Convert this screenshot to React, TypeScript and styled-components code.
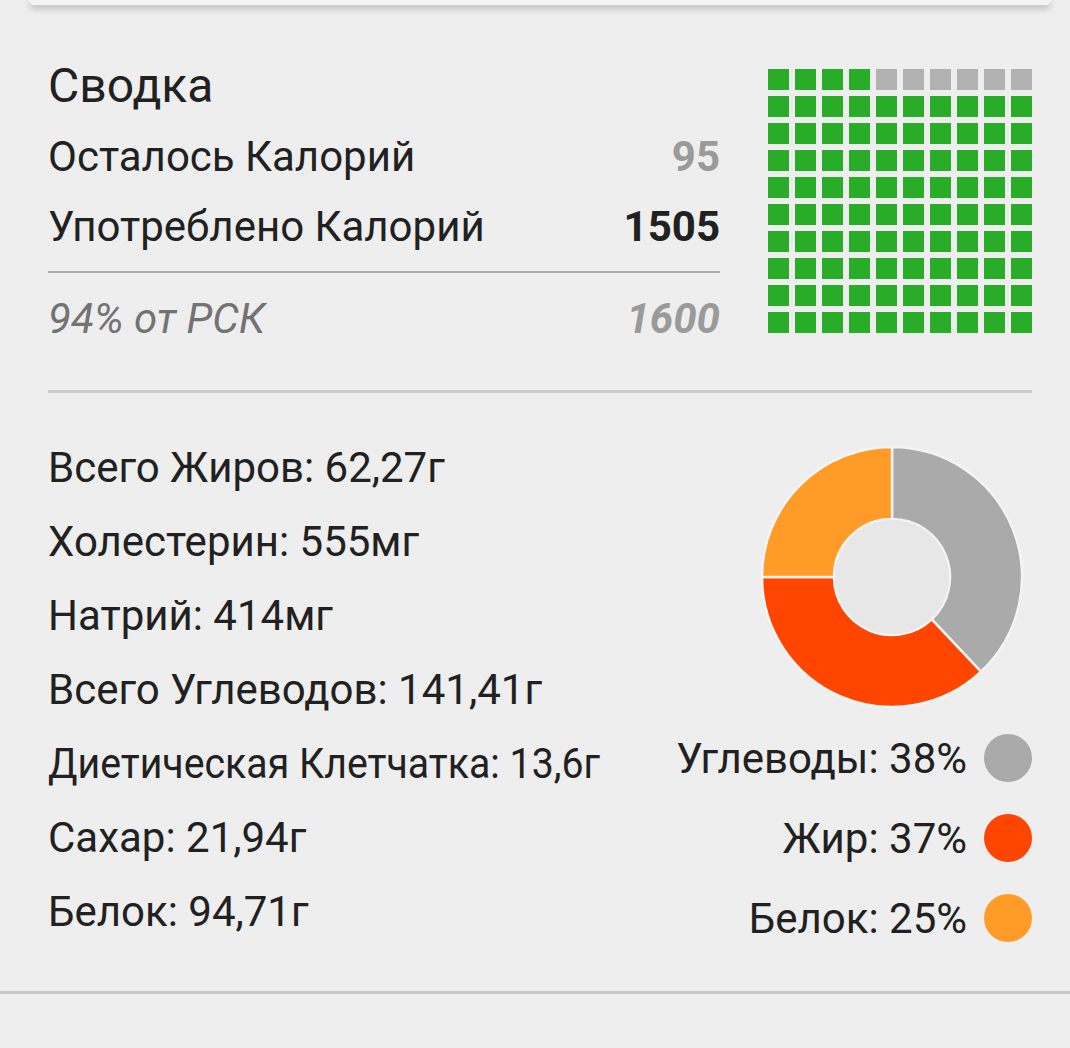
import React from "react";
import styled, { createGlobalStyle } from "styled-components";

const GlobalStyle = createGlobalStyle`
  html, body {
    margin: 0;
    padding: 0;
    background: #eeeeee;
  }
  body {
    font-family: Roboto, "Noto Sans", "Liberation Sans", sans-serif;
    color: #212121;
  }
`;

const Page = styled.div`
  width: 1070px;
  min-height: 1048px;
  background: #eeeeee;
  overflow: hidden;
`;

const TopCard = styled.div`
  height: 5px;
  margin: 0 19px 0 29px;
  background: #f4f4f4;
  border-radius: 0 0 12px 12px;
  box-shadow: 0 3px 7px rgba(0, 0, 0, 0.28);
`;

const Summary = styled.section`
  display: flex;
  gap: 48px;
  padding: 53px 38px 0 48px;
`;

const SummaryText = styled.div`
  width: 672px;
  display: flex;
  flex-direction: column;
`;

const Title = styled.h1`
  margin: 0 0 7px;
  font-size: 48px;
  line-height: 56px;
  font-weight: 400;
  color: #212121;
`;

const StatRow = styled.div<{ $italic?: boolean; $height?: number }>`
  display: flex;
  justify-content: space-between;
  align-items: center;
  height: ${(p) => p.$height ?? 70}px;
  font-size: 42px;
  font-style: ${(p) => (p.$italic ? "italic" : "normal")};
  color: ${(p) => (p.$italic ? "#737373" : "#212121")};
`;

const StatValue = styled.span<{ $tone: "muted" | "strong" }>`
  font-weight: 700;
  color: ${(p) => (p.$tone === "muted" ? "#9a9a9a" : "#212121")};
`;

const ThinRule = styled.div`
  height: 2px;
  margin-top: 10px;
  background: #ababab;
`;

const Waffle = styled.div`
  margin-top: 11px;
  display: grid;
  grid-template-columns: repeat(10, 21px);
  grid-auto-rows: 21px;
  gap: 6px;
`;

const Cell = styled.div<{ $filled: boolean }>`
  background: ${(p) => (p.$filled ? "#29ad29" : "#b1b1b1")};
`;

const SectionRule = styled.div`
  height: 3px;
  margin: 27px 38px 0 48px;
  background: #cbcbcb;
`;

const Nutrients = styled.section`
  display: flex;
  justify-content: space-between;
  padding: 37px 38px 0 48px;
`;

const NutrientList = styled.ul`
  list-style: none;
  margin: 0;
  padding: 0;
`;

const NutrientItem = styled.li`
  height: 74px;
  display: flex;
  align-items: center;
  font-size: 42px;
  color: #212121;
  white-space: nowrap;
`;

const FittedText = styled.span<{ $scale: number }>`
  display: inline-block;
  transform: scaleX(${(p) => p.$scale});
  transform-origin: left center;
`;

const MacroPanel = styled.div`
  display: flex;
  flex-direction: column;
  align-items: flex-end;
  padding-top: 17px;
`;

const Donut = styled.svg`
  display: block;
  width: 264px;
  height: 264px;
  margin: -2px 8px 9px 0;
`;

const Legend = styled.ul`
  list-style: none;
  margin: 0;
  padding: 0;
`;

const LegendItem = styled.li`
  height: 80px;
  display: flex;
  align-items: center;
  justify-content: flex-end;
  gap: 17px;
  font-size: 42px;
  color: #212121;
  white-space: nowrap;
`;

const Dot = styled.span<{ $color: string }>`
  width: 48px;
  height: 48px;
  border-radius: 50%;
  background: ${(p) => p.$color};
  flex: none;
`;

const BottomRule = styled.div`
  height: 3px;
  margin-top: 33px;
  background: #c9c9c9;
`;

const nutrients: { text: string; scale: number }[] = [
  { text: "Всего Жиров: 62,27г", scale: 1 },
  { text: "Холестерин: 555мг", scale: 1 },
  { text: "Натрий: 414мг", scale: 1 },
  { text: "Всего Углеводов: 141,41г", scale: 1 },
  { text: "Диетическая Клетчатка: 13,6г", scale: 0.935 },
  { text: "Сахар: 21,94г", scale: 1 },
  { text: "Белок: 94,71г", scale: 1 },
];

const macros = [
  { label: "Углеводы: 38%", pct: 38, color: "#aaaaaa" },
  { label: "Жир: 37%", pct: 37, color: "#ff4500" },
  { label: "Белок: 25%", pct: 25, color: "#ff9b26" },
];

function arcPath(cx: number, cy: number, r0: number, r1: number, a0: number, a1: number) {
  const rad = (d: number) => (d * Math.PI) / 180;
  const p = (r: number, a: number) => [cx + r * Math.cos(rad(a)), cy + r * Math.sin(rad(a))];
  const large = a1 - a0 > 180 ? 1 : 0;
  const [x0, y0] = p(r1, a0);
  const [x1, y1] = p(r1, a1);
  const [x2, y2] = p(r0, a1);
  const [x3, y3] = p(r0, a0);
  return `M${x0} ${y0} A${r1} ${r1} 0 ${large} 1 ${x1} ${y1} L${x2} ${y2} A${r0} ${r0} 0 ${large} 0 ${x3} ${y3} Z`;
}

function MacroDonut() {
  let start = -90;
  const segments = macros.map((m) => {
    const end = start + (m.pct / 100) * 360;
    const d = arcPath(132, 132, 58, 130, start, end);
    start = end;
    return <path key={m.label} d={d} fill={m.color} stroke="#f4f4f4" strokeWidth={2.5} strokeLinejoin="miter" />;
  });
  return (
    <Donut viewBox="0 0 264 264">
      {segments}
      <circle cx={132} cy={132} r={57} fill="#e7e7e7" />
    </Donut>
  );
}

export default function App() {
  const cells = Array.from({ length: 100 }, (_, i) => i < 4 || i >= 10);
  return (
    <Page>
      <GlobalStyle />
      <TopCard />
      <Summary>
        <SummaryText>
          <Title>Сводка</Title>
          <StatRow>
            <span>Осталось Калорий</span>
            <StatValue $tone="muted">95</StatValue>
          </StatRow>
          <StatRow>
            <span>Употреблено Калорий</span>
            <StatValue $tone="strong">1505</StatValue>
          </StatRow>
          <ThinRule />
          <StatRow $italic $height={90}>
            <span>94% от РСК</span>
            <StatValue $tone="muted">1600</StatValue>
          </StatRow>
        </SummaryText>
        <Waffle>
          {cells.map((f, i) => (
            <Cell key={i} $filled={f} />
          ))}
        </Waffle>
      </Summary>
      <SectionRule />
      <Nutrients>
        <NutrientList>
          {nutrients.map((n) => (
            <NutrientItem key={n.text}>
              <FittedText $scale={n.scale}>{n.text}</FittedText>
            </NutrientItem>
          ))}
        </NutrientList>
        <MacroPanel>
          <MacroDonut />
          <Legend>
            {macros.map((m) => (
              <LegendItem key={m.label}>
                {m.label}
                <Dot $color={m.color} />
              </LegendItem>
            ))}
          </Legend>
        </MacroPanel>
      </Nutrients>
      <BottomRule />
    </Page>
  );
}
